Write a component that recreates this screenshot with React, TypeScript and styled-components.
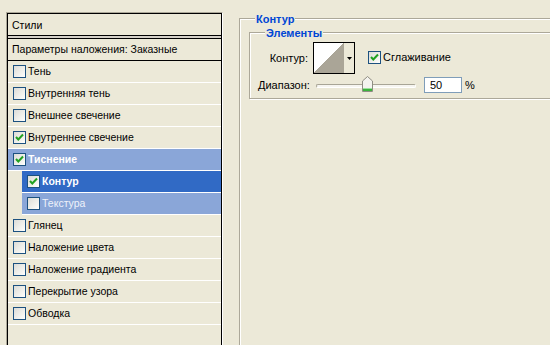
import React from "react";
import styled, { createGlobalStyle } from "styled-components";

const Global = createGlobalStyle`
  html, body { margin: 0; padding: 0; background: #ece9d8; }
  * { box-sizing: border-box; }
`;

const Page = styled.div`
  width: 550px;
  height: 345px;
  overflow: hidden;
  background: #ece9d8;
  display: flex;
  align-items: flex-start;
  padding: 12px 0 0 6px;
  font-family: "Liberation Sans", Arial, sans-serif;
  font-size: 10.5px;
  color: #000;
`;

const Panel = styled.div`
  flex-shrink: 0;
  width: 217px;
  height: 400px;
  border-top: 1px solid #aca899;
  border-left: 1px solid #aca899;
  border-right: 1px solid #fff;
`;

const PanelInner = styled.div`
  height: 100%;
  border: 1px solid #000;
`;

const Header = styled.div`
  height: 22px;
  line-height: 22px;
  padding-left: 4px;
  border-bottom: 1px solid #000;
`;

const Spacer = styled.div`
  height: 2px;
  background: #d4d0c8;
`;

const Params = styled.div`
  height: 23px;
  line-height: 21px;
  padding-left: 4px;
  border-top: 1px solid #000;
  border-bottom: 1px solid #000;
`;

type RowKind = "normal" | "parent" | "active" | "child";

const rowBg: Record<RowKind, string> = {
  normal: "transparent",
  parent: "#8aa6d8",
  active: "#316ac5",
  child: "#8aa6d8",
};
const rowColor: Record<RowKind, string> = {
  normal: "#000",
  parent: "#fff",
  active: "#fff",
  child: "#eef2fa",
};

const Row = styled.div<{ $kind: RowKind; $indent?: boolean; $bold?: boolean }>`
  display: flex;
  align-items: center;
  gap: 2px;
  height: 22px;
  line-height: 21px;
  padding-left: 5px;
  padding-bottom: 1px;
  margin-left: ${(p) => (p.$indent ? "14px" : "0")};
  border-bottom: 1px solid #fff;
  background: ${(p) => rowBg[p.$kind]};
  color: ${(p) => rowColor[p.$kind]};
  font-weight: ${(p) => (p.$bold ? "bold" : "normal")};
  white-space: nowrap;
`;

const Box = styled.span`
  display: inline-flex;
  flex-shrink: 0;
  width: 13px;
  height: 13px;
  border: 1px solid #1c5180;
  background: linear-gradient(135deg, #dcdcd7 0%, #f4f4f0 70%, #ffffff 100%);
`;

const Check: React.FC<{ on?: boolean }> = ({ on }) => (
  <Box>
    {on && (
      <svg width="11" height="11" viewBox="0 0 11 11">
        <path d="M2 5 L4.3 7.5 L9 2.5" fill="none" stroke="#21a121" strokeWidth="2" />
      </svg>
    )}
  </Box>
);

const RightCol = styled.div`
  margin-left: 16px;
  margin-top: 6px;
`;

const OuterGroup = styled.div`
  position: relative;
  width: 340px;
  height: 360px;
  border: 1px solid #aca899;
  box-shadow: inset 1px 1px 0 #fff;
  padding: 13px 0 0 9px;
`;

const GroupTitle = styled.span`
  position: absolute;
  top: -6px;
  left: 15px;
  padding: 0 1px;
  background: #ece9d8;
  color: #0046d5;
  font-weight: bold;
  font-size: 11px;
  line-height: 13px;
`;

const InnerGroup = styled.div`
  position: relative;
  width: 360px;
  border: 1px solid #aca899;
  box-shadow: 1px 1px 0 #fff, inset 1px 1px 0 #fff;
  padding: 9px 0 5px 8px;
`;

const FieldRow = styled.div<{ $h: number; $mt?: number }>`
  display: flex;
  align-items: center;
  height: ${(p) => p.$h}px;
  margin-top: ${(p) => p.$mt ?? 0}px;
`;

const Label = styled.span`
  width: 50px;
  text-align: right;
  white-space: nowrap;
  font-size: 11px;
`;

const Picker = styled.div`
  display: flex;
  margin-left: 5px;
  width: 42px;
  height: 32px;
  border: 1px solid #000;
`;

const Swatch = styled.div`
  width: 30px;
  height: 30px;
  background: linear-gradient(to top left, #aaa597 50%, #ffffff 50%);
`;

const Arrow = styled.div`
  flex: 1;
  display: flex;
  align-items: center;
  justify-content: center;
  background: #ece9d8;
`;

const CheckLabel = styled.label`
  display: flex;
  align-items: center;
  gap: 2px;
  margin-left: 13px;
  margin-top: -2px;
  font-size: 11px;
`;

const Slider = styled.div`
  position: relative;
  margin-left: 8px;
  width: 100px;
  height: 16px;
`;

const Track = styled.div`
  position: absolute;
  left: 0;
  right: 0;
  top: 7px;
  height: 4px;
  border-radius: 2px;
  border: 1px solid #a8a596;
  border-bottom-color: #fff;
  border-right-color: #fff;
  background: #f6f5f0;
`;

const Thumb = styled.svg`
  position: absolute;
  left: 46px;
  top: -1px;
`;

const NumInput = styled.div`
  margin-left: 8px;
  width: 38px;
  height: 16px;
  border: 1px solid #7f9db9;
  background: #fff;
  padding-left: 5px;
  line-height: 14px;
  font-size: 11px;
`;

const Percent = styled.span`
  margin-left: 3px;
  font-size: 11px;
`;

const items: { text: string; kind: RowKind; on?: boolean; indent?: boolean; bold?: boolean }[] = [
  { text: "Тень", kind: "normal" },
  { text: "Внутренняя тень", kind: "normal" },
  { text: "Внешнее свечение", kind: "normal" },
  { text: "Внутреннее свечение", kind: "normal", on: true },
  { text: "Тиснение", kind: "parent", on: true, bold: true },
  { text: "Контур", kind: "active", on: true, indent: true, bold: true },
  { text: "Текстура", kind: "child", indent: true },
  { text: "Глянец", kind: "normal" },
  { text: "Наложение цвета", kind: "normal" },
  { text: "Наложение градиента", kind: "normal" },
  { text: "Перекрытие узора", kind: "normal" },
  { text: "Обводка", kind: "normal" },
];

export default function App() {
  return (
    <>
      <Global />
      <Page>
        <Panel>
          <PanelInner>
            <Header>Стили</Header>
            <Spacer />
            <Params>Параметры наложения: Заказные</Params>
            {items.map((it) => (
              <Row key={it.text} $kind={it.kind} $indent={it.indent} $bold={it.bold}>
                <Check on={it.on} />
                <span>{it.text}</span>
              </Row>
            ))}
          </PanelInner>
        </Panel>
        <RightCol>
          <OuterGroup>
            <GroupTitle>Контур</GroupTitle>
            <InnerGroup>
              <GroupTitle>Элементы</GroupTitle>
              <FieldRow $h={32}>
                <Label>Контур:</Label>
                <Picker>
                  <Swatch />
                  <Arrow>
                    <svg width="5" height="3" viewBox="0 0 5 3">
                      <path d="M0 0 H5 L2.5 3 Z" fill="#000" />
                    </svg>
                  </Arrow>
                </Picker>
                <CheckLabel>
                  <Check on />
                  <span>Сглаживание</span>
                </CheckLabel>
              </FieldRow>
              <FieldRow $h={16} $mt={3}>
                <Label>Диапазон:</Label>
                <Slider>
                  <Track />
                  <Thumb width="11" height="16" viewBox="0 0 11 16">
                    <path d="M0.5 5 L5.5 0.5 L10.5 5 L10.5 15.5 L0.5 15.5 Z" fill="#f4f3ee" stroke="#8f8d83" />
                    <rect x="1" y="12" width="9" height="3" fill="#3cb33c" />
                    <rect x="1" y="12" width="9" height="1" fill="#9ee09e" />
                  </Thumb>
                </Slider>
                <NumInput>50</NumInput>
                <Percent>%</Percent>
              </FieldRow>
            </InnerGroup>
          </OuterGroup>
        </RightCol>
      </Page>
    </>
  );
}
